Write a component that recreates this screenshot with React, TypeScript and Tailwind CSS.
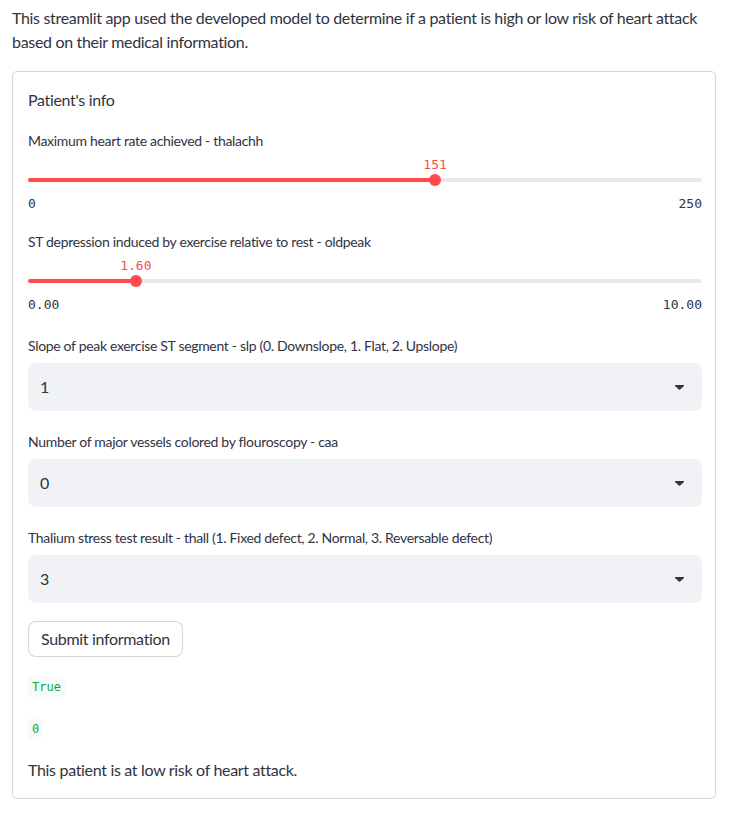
const sans = "font-['Lato','Noto_Sans',sans-serif] tracking-[-0.02em]";
const mono = "font-['DejaVu_Sans_Mono','Liberation_Mono',monospace] tracking-normal";

type SliderProps = {
  label: string;
  value: number;
  min: number;
  max: number;
  fmt: (n: number) => string;
  className?: string;
};

function Slider({ label, value, min, max, fmt, className = '' }: SliderProps) {
  const pct = ((value - min) / (max - min)) * 100;
  return (
    <div className={className}>
      <div className="h-[21px] text-sm leading-[21px]">{label}</div>
      <div className="relative mt-[2px] h-[21px]">
        <span
          className={`absolute top-[1px] -translate-x-1/2 text-[13px] leading-[21px] text-[#ff4b4b] ${mono}`}
          style={{ left: `${pct}%` }}
        >
          {fmt(value)}
        </span>
      </div>
      <div className="relative h-3">
        <div className="absolute left-0 right-0 top-1 h-1 rounded-full bg-[#e6eaf1]" />
        <div className="absolute left-0 top-1 h-1 rounded-full bg-[#ff4b4b]" style={{ width: `${pct}%` }} />
        <div
          className="absolute top-0 h-3 w-3 -translate-x-1/2 rounded-full bg-[#ff4b4b]"
          style={{ left: `${pct}%` }}
        />
      </div>
      <div className={`mt-2 flex h-5 items-center justify-between text-[13px] ${mono}`}>
        <span>{fmt(min)}</span>
        <span>{fmt(max)}</span>
      </div>
    </div>
  );
}

function Select({ label, value, className = '' }: { label: string; value: string; className?: string }) {
  return (
    <div className={className}>
      <div className="h-[21px] text-sm leading-[21px]">{label}</div>
      <div className="mt-[7px] flex h-12 items-center justify-between rounded-lg bg-[#f0f2f6] pl-3 pr-[18px]">
        <span className="text-base">{value}</span>
        <svg width="9" height="5" viewBox="0 0 9 5" className="text-[#31333f]">
          <path d="M0 0h9v1L4.5 5 0 1z" fill="currentColor" />
        </svg>
      </div>
    </div>
  );
}

export default function App() {
  const asInt = (n: number) => String(n);
  const asDec = (n: number) => n.toFixed(2);

  return (
    <div className={`min-h-screen bg-white pl-3 pr-4 pt-[6px] text-[#31333f] ${sans}`}>
      <p className="text-base leading-6">
        This streamlit app used the developed model to determine if a patient is high or low risk of heart attack
        based on their medical information.
      </p>

      <div className="mt-[17px] rounded-[5px] border border-[#31333f]/20 pb-4 pl-[15px] pr-[13px]">
        <div className="mt-4 h-6 text-base leading-6">Patient's info</div>

        <Slider
          className="mt-[18px]"
          label="Maximum heart rate achieved - thalachh"
          value={151}
          min={0}
          max={250}
          fmt={asInt}
        />
        <Slider
          className="mt-[17px]"
          label="ST depression induced by exercise relative to rest - oldpeak"
          value={1.6}
          min={0}
          max={10}
          fmt={asDec}
        />

        <Select
          className="mt-5"
          label="Slope of peak exercise ST segment - slp (0. Downslope, 1. Flat, 2. Upslope)"
          value="1"
        />
        <Select className="mt-5" label="Number of major vessels colored by flouroscopy - caa" value="0" />
        <Select
          className="mt-5"
          label="Thalium stress test result - thall (1. Fixed defect, 2. Normal, 3. Reversable defect)"
          value="3"
        />

        <button className="mt-[18px] h-9 rounded-lg border border-[#31333f]/20 bg-white px-3 text-base">
          Submit information
        </button>

        <div className="mt-5 flex">
          <code className={`h-5 rounded bg-[#f8f9fb] px-1 text-xs leading-5 text-[#09ab3b] ${mono}`}>True</code>
        </div>
        <div className="mt-[22px] flex">
          <code className={`h-5 rounded bg-[#f8f9fb] px-1 text-xs leading-5 text-[#09ab3b] ${mono}`}>0</code>
        </div>

        <p className="mt-[19px] h-6 text-base leading-6">This patient is at low risk of heart attack.</p>
      </div>
    </div>
  );
}
